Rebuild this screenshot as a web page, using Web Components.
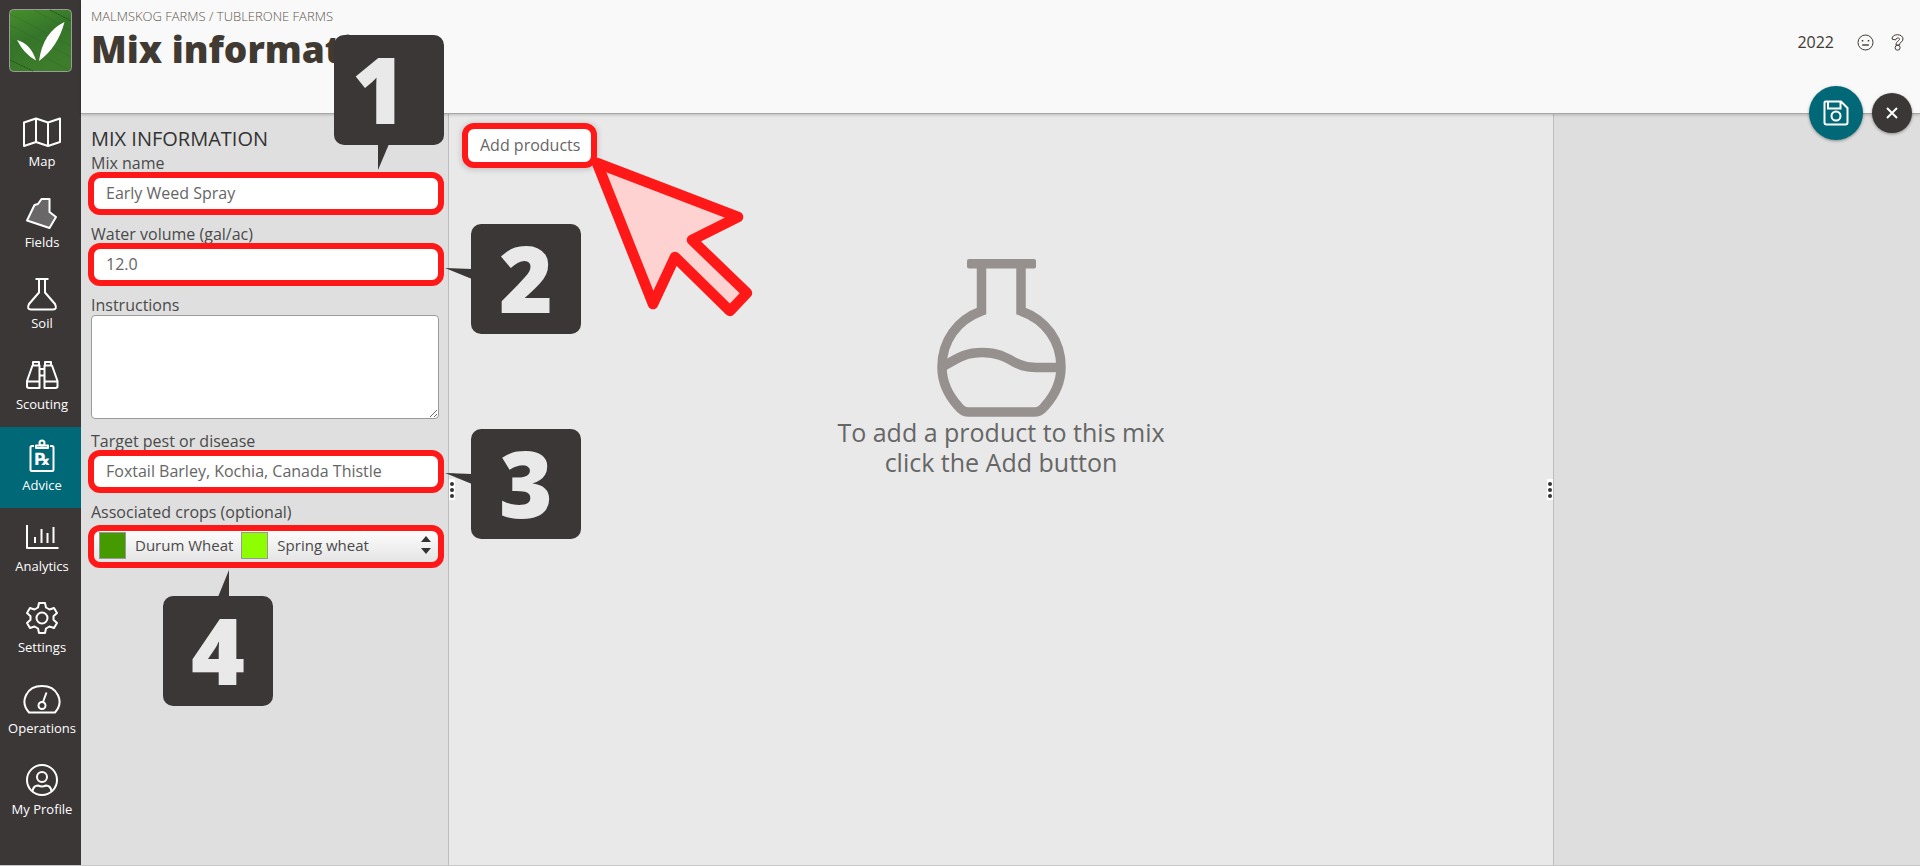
<!DOCTYPE html>
<html lang="en">
<head>
<meta charset="utf-8">
<title>Mix information</title>
<style>

    html, body
    {
        margin: 0;
        height: 100%;
    }

    body
    {
        font-family: "Open Sans", "Noto Sans", sans-serif;
        font-size: 16px;
        line-height: 20px;
        color: #4a4a4a;
        background: #e9e9e9;
    }

</style>
</head>
<body>

<mix-app></mix-app>

<script>

(function() {

// all nav icons are drawn on a 40x40 grid
const icons = {
    map: `<path d="M2 10.5 14 6.5 26 10.5 38 6.5V30L26 34 14 30 2 34ZM14 6.5V30M26 10.5V34"/>`,
    fields: `<path fill="#696767" d="M19.5 6H27.5V19L34 24 27.5 35 5 27.5 12.5 12 16 11Z"/>`,
    soil: `<path d="M13.5 5H26.5M17 5V18.5L7 30Q4.5 35.5 9 35.5H31Q35.5 35.5 33 30L23 18.5V5"/>`,
    scouting: `<path d="M5 32V26L10.5 10.5H17.5V33H7Q5 33 5 31ZM35.5 32V26L30 10.5H22.5V33H33.5Q35.5 33 35.5 31ZM5 26.5H17.5M22.5 26.5H35.5M17.5 14H22.5M17.5 20.5H22.5M11 10.5V7H17V10.5M23 10.5V7H29V10.5"/>`,
    advice: `<path d="M12 10H10Q8.5 10 8.5 11.5V33.5Q8.5 35 10 35H30Q31.5 35 31.5 33.5V11.5Q31.5 10 30 10H28M14 9.5H26V12H14Z"/><circle cx="20" cy="7" r="2.5"/><text x="20" y="29" text-anchor="middle" font-family="DejaVu Sans" font-size="17" font-weight="700" fill="#fff" stroke="none">℞</text>`,
    analytics: `<path d="M5 8V31H36.5M13 26V20M19.5 26V12M25.5 26V16M31.5 26V10"/>`,
    settings: `<path d="M17 5H23L24 9.500 27.500 11.500 32 10 35 15 31.500 18.200V21.800L35 25 32 30 27.500 28.500 24 30.500 23 35H17L16 30.500 12.500 28.500 8 30 5 25 8.500 21.800V18.200L5 15 8 10 12.500 11.500 16 9.500Z"/><circle cx="20" cy="20" r="5.5"/>`,
    operations: `<path d="M7 33.5C-3 22 5 7 20 7S43 22 33 33.5ZM21 23 24.5 13.5"/><circle cx="20" cy="26.5" r="3.5"/>`,
    profile: `<circle cx="20" cy="20" r="15"/><circle cx="20" cy="17" r="5"/><path d="M10.5 31Q11.5 25.5 16 25.5 20 27.5 24 25.5 28.5 25.5 29.5 31"/>`
};

function define(name, html, setup)
{
    const template = document.createElement('template');
    template.innerHTML = html;

    customElements.define(name, class extends HTMLElement
    {
        constructor()
        {
            super();
            this.dom = this.attachShadow({mode: 'open'});
            this.dom.appendChild(template.content.cloneNode(true));
        }

        connectedCallback()
        {
            if (setup)
            {
                setup(this, this.dom);
            }
        }
    });
}


define('nav-item', `
    <style>
        :host { display: block; }
        a
        {
            display: flex;
            flex-direction: column;
            align-items: center;
            box-sizing: border-box;
            height: 81px;
            padding: 9px 0 0 3px;
            color: #fff;
            font-size: 13px;
            font-weight: 500;
            line-height: 18px;
            text-decoration: none;
            white-space: nowrap;
        }
        :host([active]) a { background: #006877; }
        svg
        {
            width: 40px;
            height: 40px;
            fill: none;
            stroke: #fff;
            stroke-width: 2;
            stroke-linejoin: round;
        }
    </style>
    <a href="#"><svg viewBox="0 0 40 40" aria-hidden="true"></svg><slot></slot></a>
`, (el, dom) =>
{
    dom.querySelector('svg').innerHTML = icons[el.getAttribute('icon')];
});


define('nav-bar', `
    <style>
        :host
        {
            display: block;
            width: 81px;
            flex: none;
            background: #3c3737;
        }
        .logo
        {
            display: block;
            width: 63px;
            height: 63px;
            padding: 9px 9px 31px;
        }
    </style>
    <a class="logo" href="#" aria-label="Home">
        <svg width="63" height="63" viewBox="0 0 63 63">
            <defs>
                <linearGradient id="g" x1="0" y1="0" x2="0.4" y2="1">
                    <stop offset="0" stop-color="#478f2c"/>
                    <stop offset="0.5" stop-color="#35752a"/>
                    <stop offset="1" stop-color="#3d7c2a"/>
                </linearGradient>
            </defs>
            <rect x="0.5" y="0.5" width="62" height="62" rx="4" fill="url(#g)" stroke="#9b9b98"/>
            <path d="M1 16 62 48M1 30 60 61M25 1 62 22M1 5 62 37" stroke="#2e6a26" opacity="0.4"/>
            <path d="M41 1 62 12M1 51 24 62" stroke="#224d1d" stroke-dasharray="2 1"/>
            <path fill="#fff" d="M8 31Q22 35 27 51.5 15 45 8 31ZM30 52Q34 23 55.5 13 49 38 30 52Z"/>
        </svg>
    </a>
    <nav>
        <nav-item icon="map">Map</nav-item>
        <nav-item icon="fields">Fields</nav-item>
        <nav-item icon="soil">Soil</nav-item>
        <nav-item icon="scouting">Scouting</nav-item>
        <nav-item icon="advice" active>Advice</nav-item>
        <nav-item icon="analytics">Analytics</nav-item>
        <nav-item icon="settings">Settings</nav-item>
        <nav-item icon="operations">Operations</nav-item>
        <nav-item icon="profile">My Profile</nav-item>
    </nav>
`);


define('page-header', `
    <style>
        :host
        {
            display: flex;
            justify-content: space-between;
            position: relative;
            box-sizing: border-box;
            height: 114px;
            padding: 6px 16px 0 10px;
            background: #f9f9f9;
            border-bottom: 1px solid #a5a8a3;
            box-shadow: 0 1px 3px rgba(0, 0, 0, 0.2);
            z-index: 1;
        }
        .crumbs
        {
            font-size: 13px;
            font-weight: 300;
            color: #5c564e;
        }
        h1
        {
            margin: 0;
            font-size: 37px;
            font-weight: 800;
            line-height: 46px;
            color: #403a33;
        }
        .tools
        {
            display: flex;
            align-items: center;
            gap: 17px;
            height: 72px;
            color: #403a33;
        }
        .tools span { margin-right: 6px; }
        .tools button
        {
            display: block;
            padding: 0;
            border: 0;
            background: none;
        }
        svg { display: block; fill: none; stroke: #403a33; }
        .round
        {
            display: flex;
            align-items: center;
            justify-content: center;
            padding: 0;
            border: 0;
            border-radius: 50%;
            box-shadow: 0 1px 3px rgba(0, 0, 0, 0.4);
        }
        .round svg { stroke: #fff; }
        .save { width: 54px; height: 54px; background: #006877; }
        .close { width: 40px; height: 40px; background: #3c3737; }
        /* floats over the lower edge of the header */
        .actions
        {
            position: absolute;
            right: 8px;
            bottom: -27px;
            display: flex;
            align-items: center;
            gap: 9px;
        }
    </style>
    <div>
        <div class="crumbs">MALMSKOG FARMS / TUBLERONE FARMS</div>
        <h1>Mix information</h1>
    </div>
    <div class="tools">
        <span>2022</span>
        <button aria-label="Feedback">
            <svg width="17" height="17" viewBox="0 0 17 17"><circle cx="8.5" cy="8.5" r="7.5"/><path d="M5.500 11.500V10.500H11.500V11.500Z" stroke-width="0.7"/><path d="M5.5 6V7.500M11.5 6V7.500" stroke-width="1.5"/></svg>
        </button>
        <button aria-label="Help">
            <svg width="13" height="17" viewBox="0 0 13 17"><path d="M1 5C1 2 3.5.7 6.5.7S12 2.5 12 5C12 8 8.5 8 8.5 11H5C5 7 8.5 7 8.5 5 8.5 3.5 5 3.5 4.5 6Z"/><circle cx="6.6" cy="13.7" r="2.5"/></svg>
        </button>
    </div>
    <div class="actions">
        <button class="round save" aria-label="Save">
            <svg width="26" height="26" viewBox="0 0 26 26" stroke-width="2"><path d="M2.5 1.5H18L24.5 8V22.5Q24.5 24.5 22.5 24.5H3.5Q1.5 24.5 1.5 22.5V2.5Q1.5 1.5 2.5 1.5ZM5 2V8.5H17.5V2"/><circle cx="13" cy="16" r="4.5"/></svg>
        </button>
        <button class="round close" aria-label="Close">
            <svg width="12" height="12" viewBox="0 0 12 12" stroke-width="2"><path d="M1 1 11 11M11 1 1 11"/></svg>
        </button>
    </div>
`);


// red frame around whatever is slotted in
define('mark-box', `
    <style>
        :host { display: block; position: relative; }
        :host::after
        {
            content: "";
            position: absolute;
            inset: -3px -5px -3px -3px;
            border: 6px solid #ff1818;
            border-radius: 12px;
            pointer-events: none;
        }
    </style>
    <slot></slot>
`);


define('text-field', `
    <style>
        :host, label { display: block; }
        mark-box { margin-top: 2px; }
        input, textarea
        {
            display: block;
            box-sizing: border-box;
            width: 100%;
            margin: 0;
            border: 1px solid #9a9a9a;
            border-radius: 4px;
            background: #fff;
            color: #666;
            font: inherit;
        }
        input { height: 37px; padding: 0 14px 2px; }
        textarea { height: 104px; padding: 8px 14px; }
    </style>
    <label for="field"></label>
`, (el, dom) =>
{
    dom.querySelector('label').textContent = el.getAttribute('label');

    if (el.hasAttribute('multiline'))
    {
        let area = document.createElement('textarea');
        area.id = 'field';
        dom.appendChild(area);
        return;
    }

    let box = document.createElement('mark-box');
    let input = document.createElement('input');
    input.id = 'field';
    input.type = 'text';
    input.value = el.getAttribute('value');
    box.appendChild(input);
    dom.appendChild(box);
});


define('crop-picker', `
    <style>
        :host, label { display: block; }
        label { margin-bottom: 6px; }
        button
        {
            display: flex;
            align-items: center;
            box-sizing: border-box;
            width: 100%;
            height: 37px;
            padding: 0 5px 3px 8px;
            border: 0;
            border-radius: 6px;
            background: linear-gradient(#fff, #e2e2e2);
            color: #4a4a4a;
            font: inherit;
            font-size: 15px;
        }
        i
        {
            box-sizing: border-box;
            width: 27px;
            height: 27px;
            margin-right: 9px;
            border: 1px solid #999;
        }
        span { margin-right: 8px; }
        svg { margin-left: auto; }
    </style>
    <label for="crops">Associated crops (optional)</label>
    <mark-box>
        <button id="crops" type="button" aria-haspopup="listbox">
            <i style="background: #459a00"></i><span>Durum Wheat</span>
            <i style="background: #8eff00"></i><span>Spring wheat</span>
            <svg width="16" height="20" viewBox="0 0 16 20" fill="#333"><path d="M3 7 8 1 13 7ZM3 13H13L8 19Z"/></svg>
        </button>
    </mark-box>
`);


define('mix-form', `
    <style>
        :host
        {
            display: block;
            box-sizing: border-box;
            width: 368px;
            flex: none;
            padding: 13px 9px 0 10px;
            background: #dfdfdf;
            border-right: 1px solid #bdbdbd;
        }
        h2
        {
            margin: 0 0 2px;
            font-size: 20px;
            font-weight: 500;
            line-height: 24px;
            color: #333;
        }
        form { display: flex; flex-direction: column; gap: 12px; }
    </style>
    <h2>MIX INFORMATION</h2>
    <form>
        <text-field label="Mix name" value="Early Weed Spray"></text-field>
        <text-field label="Water volume (gal/ac)" value="12.0"></text-field>
        <text-field label="Instructions" multiline></text-field>
        <text-field label="Target pest or disease" value="Foxtail Barley, Kochia, Canada Thistle"></text-field>
        <crop-picker></crop-picker>
    </form>
`);


define('split-handle', `
    <style>
        :host
        {
            display: flex;
            flex-direction: column;
            align-items: center;
            justify-content: center;
            align-self: center;
            gap: 2px;
            width: 6px;
            height: 21px;
            flex: none;
            background: #fff;
        }
        b
        {
            width: 4px;
            height: 4px;
            border-radius: 50%;
            background: #333;
        }
    </style>
    <b></b><b></b><b></b>
`);


define('product-list', `
    <style>
        :host { display: flex; flex: 1; min-width: 0; }
        .main
        {
            display: flex;
            flex-direction: column;
            align-items: center;
            flex: 1;
            padding-top: 12px;
        }
        mark-box { align-self: flex-start; margin: 0 10px; }
        mark-box::after { inset: -3px; }
        button
        {
            display: block;
            height: 39px;
            padding: 0 14px 2px 15px;
            border: 0;
            border-radius: 6px;
            background: #fff;
            box-shadow: 0 1px 6px 3px rgba(0, 0, 0, 0.2);
            color: #666;
            font: inherit;
        }
        svg { margin-top: 94px; }
        p
        {
            width: 340px;
            margin: 0;
            font-size: 25px;
            line-height: 30px;
            text-align: center;
            color: #666;
        }
    </style>
    <split-handle></split-handle>
    <div class="main">
        <mark-box><button>Add products</button></mark-box>
        <svg width="129" height="158" viewBox="0 0 129 158" fill="none" stroke="#96918e" stroke-width="9.5">
            <rect x="30" y="0" width="69" height="9.5" rx="2" fill="#96918e" stroke="none"/>
            <path d="M44.5 5V52C20 61 5 82 5 108C5 124 12 137 21 147C24 151 27 153 31 153H98C102 153 105 151 108 147C117 137 124 124 124 108C124 82 109 61 84 52V5"/>
            <path d="M7 107C22 98 29 93.5 46 93.5C60 93.5 68 98 77 103C87 108 92 108.5 104 108.5H122"/>
        </svg>
        <p>To add a product to this mix click the Add button</p>
    </div>
    <split-handle></split-handle>
`);


// numbered callout, the tail attribute says which way it points
define('step-callout', `
    <style>
        :host
        {
            position: absolute;
            box-sizing: border-box;
            width: 110px;
            height: 110px;
            border-radius: 10px;
            background: #3c3737;
            color: #e9e9e9;
            font-size: 92px;
            font-weight: 800;
            line-height: 108px;
            text-align: center;
        }
        :host([narrow]) { padding-right: 20px; }
        svg { position: absolute; left: 0; top: 0; overflow: visible; fill: #3c3737; }
    </style>
    <svg width="110" height="110" aria-hidden="true"><path/></svg><slot></slot>
`, (el, dom) =>
{
    const tails = {
        down: 'M44 109V135L55 109Z',
        left: 'M1 45-26 44 1 55Z',
        up: 'M55 1 66-26V1Z'
    };
    dom.querySelector('path').setAttribute('d', tails[el.getAttribute('tail')]);
});


define('mix-app', `
    <style>
        :host
        {
            display: flex;
            position: relative;
            box-sizing: border-box;
            min-height: 100%;
            border-bottom: 1px solid #c8c8c8;
        }
        .page { display: flex; flex-direction: column; flex: 1; min-width: 0; }
        .panes { display: flex; flex: 1; }
        aside
        {
            box-sizing: border-box;
            width: 367px;
            flex: none;
            background: #dedede;
            border-left: 1px solid #bdbdbd;
        }
        step-callout, .arrow { z-index: 2; }
        .arrow { position: absolute; left: 590px; top: 155px; pointer-events: none; }
    </style>
    <nav-bar></nav-bar>
    <div class="page">
        <page-header></page-header>
        <div class="panes">
            <mix-form></mix-form>
            <product-list></product-list>
            <aside></aside>
        </div>
    </div>
    <step-callout tail="down" narrow style="left: 334px; top: 35px">1</step-callout>
    <step-callout tail="left" style="left: 471px; top: 224px">2</step-callout>
    <step-callout tail="left" style="left: 471px; top: 429px">3</step-callout>
    <step-callout tail="up" style="left: 163px; top: 596px">4</step-callout>
    <svg class="arrow" width="170" height="170" viewBox="590 155 170 170" aria-hidden="true">
        <path d="M597 163 738 217 692 240 747 293 730 311 675 257 653 304Z" fill="#ffd2d2" stroke="#ff1818" stroke-width="10.5" stroke-linejoin="round"/>
    </svg>
`);

})();

</script>
</body>
</html>
